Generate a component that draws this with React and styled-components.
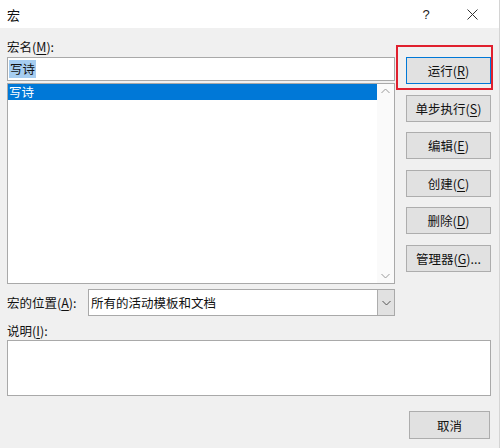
import React from "react";
import styled, { createGlobalStyle } from "styled-components";

const GlobalStyle = createGlobalStyle`
  html, body {
    margin: 0;
    padding: 0;
    background: #f0f0f0;
  }
  body {
    font-family: "Noto Sans CJK SC", "Liberation Sans", sans-serif;
    font-size: 12.5px;
    color: #111;
  }
`;

const Window = styled.div`
  width: 500px;
  height: 448px;
  box-sizing: border-box;
  border-right: 1px solid #d4d4d4;
  background: #f0f0f0;
  display: flex;
  flex-direction: column;
  overflow: hidden;
`;

const TitleBar = styled.div`
  height: 28px;
  flex-shrink: 0;
  background: #fff;
  display: flex;
  align-items: center;
  padding: 0 7px;
  font-size: 13px;
`;

const Title = styled.span`
  flex: 1;
`;

const TitleButton = styled.div`
  width: ${(p) => p.w}px;
  margin-right: ${(p) => p.gap || 0}px;
  height: 28px;
  display: flex;
  align-items: center;
  justify-content: center;
  font-family: "Liberation Sans", sans-serif;
  font-size: 13px;
  color: #222;
`;

const Body = styled.div`
  padding: 10px 0 0 7px;
  display: flex;
  flex-direction: column;
`;

const Top = styled.div`
  display: flex;
`;

const LeftCol = styled.div`
  width: 388px;
  display: flex;
  flex-direction: column;
`;

const RightCol = styled.div`
  width: 85px;
  margin-left: 11px;
  padding-top: 19px;
  display: flex;
  flex-direction: column;
  gap: 10.5px;
`;

const Label = styled.div`
  height: 17px;
  line-height: 17px;
  white-space: nowrap;
`;

const Key = styled.span`
  text-decoration: underline;
  text-underline-offset: 2px;
`;

const TextInput = styled.div`
  margin-top: 2px;
  height: 24px;
  box-sizing: border-box;
  background: #fff;
  border: 1px solid #a9a9a9;
  display: flex;
  align-items: center;
  padding-left: 1px;
`;

const Selection = styled.span`
  background: #a6cdf0;
  padding: 0 1px;
  line-height: 18px;
`;

const List = styled.div`
  margin-top: 2px;
  height: 201px;
  box-sizing: border-box;
  background: #fff;
  border: 1px solid #a9a9a9;
  display: flex;
`;

const Items = styled.div`
  flex: 1;
`;

const Item = styled.div`
  height: 16px;
  line-height: 16px;
  padding-left: 1px;
  background: ${(p) => (p.selected ? "#0078d7" : "transparent")};
  color: ${(p) => (p.selected ? "#fff" : "#111")};
`;

const ScrollBar = styled.div`
  width: 17px;
  background: #fafafa;
  display: flex;
  flex-direction: column;
  justify-content: space-between;
  align-items: center;
  padding: 4px 0;
`;

const Chevron = ({ up, color = "#9a9a9a" }) => (
  <svg width="9" height="6" viewBox="0 0 9 6">
    <path
      d={up ? "M0.5 5 L4.5 1 L8.5 5" : "M0.5 1 L4.5 5 L8.5 1"}
      fill="none"
      stroke={color}
      strokeWidth="1"
    />
  </svg>
);

const Button = styled.div`
  position: relative;
  height: ${(p) => p.h || 27}px;
  width: ${(p) => p.w || 85}px;
  box-sizing: border-box;
  background: #e1e1e1;
  border: 1px solid ${(p) => (p.primary ? "#0078d7" : "#adadad")};
  display: flex;
  align-items: center;
  justify-content: center;
  white-space: nowrap;
`;

const Marker = styled.div`
  position: absolute;
  left: -11px;
  top: -13px;
  right: -3px;
  bottom: -7px;
  border: 2px solid #e0202e;
  pointer-events: none;
`;

const Row = styled.div`
  display: flex;
  align-items: center;
  width: 388px;
  margin-top: 5px;
`;

const Combo = styled.div`
  margin-left: auto;
  width: 307px;
  height: 27px;
  box-sizing: border-box;
  background: #fff;
  border: 1px solid #a9a9a9;
  display: flex;
  align-items: center;
`;

const ComboText = styled.span`
  flex: 1;
  padding-left: 2px;
`;

const ComboArrow = styled.div`
  width: 17px;
  height: 100%;
  box-sizing: border-box;
  background: #e1e1e1;
  border-left: 1px solid #adadad;
  display: flex;
  align-items: center;
  justify-content: center;
`;

const DescLabel = styled(Label)`
  margin-top: 6px;
`;

const TextArea = styled.div`
  margin-top: 1px;
  width: 484px;
  height: 56px;
  box-sizing: border-box;
  background: #fff;
  border: 1px solid #a9a9a9;
`;

const Footer = styled.div`
  display: flex;
  justify-content: flex-end;
  padding-right: 9px;
  margin-top: 15px;
`;

const actions = [
  ["编辑", "E"],
  ["创建", "C"],
  ["删除", "D"],
];

export default function App() {
  return (
    <>
      <GlobalStyle />
      <Window>
        <TitleBar>
          <Title>宏</Title>
          <TitleButton w={20} gap={16}>?</TitleButton>
          <TitleButton w={40}>
            <svg width="11" height="11" viewBox="0 0 11 11">
              <path d="M0.5 0.5 L10.5 10.5 M10.5 0.5 L0.5 10.5" stroke="#333" strokeWidth="1" />
            </svg>
          </TitleButton>
        </TitleBar>
        <Body>
          <Top>
            <LeftCol>
              <Label>
                宏名(<Key>M</Key>):
              </Label>
              <TextInput>
                <Selection>写诗</Selection>
              </TextInput>
              <List>
                <Items>
                  <Item selected>写诗</Item>
                </Items>
                <ScrollBar>
                  <Chevron up />
                  <Chevron />
                </ScrollBar>
              </List>
            </LeftCol>
            <RightCol>
              <Button primary>
                运行(<Key>R</Key>)
                <Marker />
              </Button>
              <Button>
                单步执行(<Key>S</Key>)
              </Button>
              {actions.map(([name, key]) => (
                <Button key={key}>
                  {name}(<Key>{key}</Key>)
                </Button>
              ))}
              <Button>
                管理器(<Key>G</Key>)...
              </Button>
            </RightCol>
          </Top>
          <Row>
            <Label>
              宏的位置(<Key>A</Key>):
            </Label>
            <Combo>
              <ComboText>所有的活动模板和文档</ComboText>
              <ComboArrow>
                <Chevron color="#555" />
              </ComboArrow>
            </Combo>
          </Row>
          <DescLabel>
            说明(<Key>I</Key>):
          </DescLabel>
          <TextArea />
          <Footer>
            <Button w={81} h={28}>取消</Button>
          </Footer>
        </Body>
      </Window>
    </>
  );
}
